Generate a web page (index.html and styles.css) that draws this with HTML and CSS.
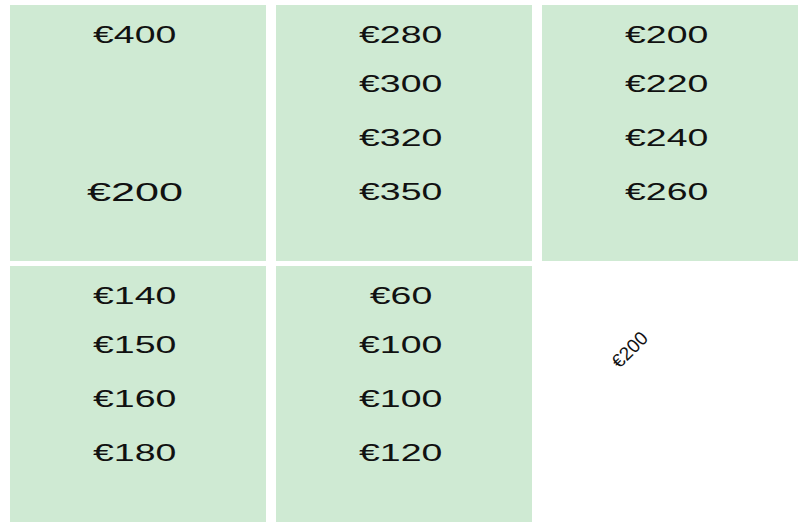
FILE: index.html
```html
<!DOCTYPE html>
<html>
<head>
<meta charset="utf-8">
<link rel="stylesheet" href="styles.css">
</head>
<body>
<div class="grid">
  <div class="cell">
    <div class="line first"><span class="price">€400</span></div>
    <div class="line big-gap"><span class="price big">€200</span></div>
  </div>
  <div class="cell">
    <div class="line first"><span class="price">€280</span></div>
    <div class="line"><span class="price">€300</span></div>
    <div class="line"><span class="price">€320</span></div>
    <div class="line"><span class="price">€350</span></div>
  </div>
  <div class="cell">
    <div class="line first"><span class="price">€200</span></div>
    <div class="line"><span class="price">€220</span></div>
    <div class="line"><span class="price">€240</span></div>
    <div class="line"><span class="price">€260</span></div>
  </div>
  <div class="cell">
    <div class="line first"><span class="price">€140</span></div>
    <div class="line"><span class="price">€150</span></div>
    <div class="line"><span class="price">€160</span></div>
    <div class="line"><span class="price">€180</span></div>
  </div>
  <div class="cell">
    <div class="line first"><span class="price">€60</span></div>
    <div class="line"><span class="price">€100</span></div>
    <div class="line"><span class="price">€100</span></div>
    <div class="line"><span class="price">€120</span></div>
  </div>
  <div class="cell plain">
    <div class="tilted">€200</div>
  </div>
</div>
</body>
</html>
```

FILE: styles.css
```css
html, body {
  margin: 0;
  padding: 0;
  background: #ffffff;
}

.grid {
  display: grid;
  grid-template-columns: repeat(3, 256px);
  grid-auto-rows: 256px;
  column-gap: 10px;
  row-gap: 5px;
  padding: 5px 10px;
  font-family: "Liberation Sans", Arial, sans-serif;
  color: #111111;
}

.cell {
  background: #cfead3;
  display: flex;
  flex-direction: column;
  align-items: center;
  padding: 8px 6px 0 0;
  box-sizing: border-box;
}

.line {
  height: 54px;
  line-height: 54px;
  text-align: center;
}

.line.first {
  height: 44px;
  line-height: 44px;
}

.line.big-gap {
  margin-top: 108px;
}

.price {
  display: inline-block;
  font-size: 24px;
  transform: scaleX(1.56);
}

.price.big {
  font-size: 26px;
  transform: scaleX(1.66);
}

.cell.plain {
  background: transparent;
  padding: 74px 0 0 48px;
  align-items: flex-start;
}

.tilted {
  width: 80px;
  height: 20px;
  line-height: 20px;
  text-align: center;
  font-size: 19px;
  transform: rotate(-45deg);
}
```
